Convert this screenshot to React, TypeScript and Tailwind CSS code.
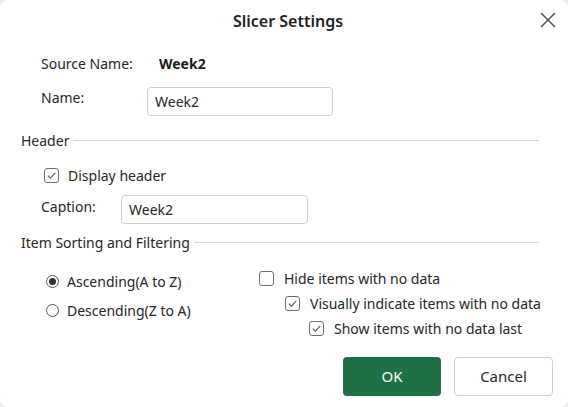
import { X } from "lucide-react";

const Check = ({ checked }: { checked: boolean }) => (
  <span className="flex size-[15px] shrink-0 items-center justify-center rounded-[3px] border border-[#6f6f6f] bg-white">
    {checked && (
      <svg viewBox="0 0 12 12" className="size-[13px]" fill="none">
        <path d="M2.6 6.1 L5 8.5 L9.5 3.6" stroke="#555" strokeWidth="1" />
      </svg>
    )}
  </span>
);

const Radio = ({ checked }: { checked: boolean }) => (
  <span className="flex size-[13px] shrink-0 items-center justify-center rounded-full border border-[#555]">
    {checked && <span className="size-[7px] rounded-full bg-[#333]" />}
  </span>
);

const Section = ({ title }: { title: string }) => (
  <div className="flex h-[20px] items-center gap-[4px] pl-[21px] pr-[29px]">
    <span>{title}</span>
    <span className="h-px flex-1 bg-[#d6d6d6]" />
  </div>
);

export default function App() {
  return (
    <div
      className="h-[407px] w-[568px] bg-[#ececec] text-[14px] text-[#262626]"
      style={{ fontFamily: '"Noto Sans", "Open Sans", sans-serif' }}
    >
      <div className="relative flex h-full flex-col rounded-[8px] bg-white">
        <div className="flex h-[41px] items-center justify-center pl-[8px]">
          <span className="text-[16px] font-semibold text-[#1f1f1f]">Slicer Settings</span>
          <X className="absolute right-[7px] top-[7px] size-[26px] text-[#555]" strokeWidth={1.4} />
        </div>

        <div className="mt-[11px] flex h-[22px] items-center pl-[41px]">
          <span className="w-[118px]">Source Name:</span>
          <span className="font-bold text-[#1a1a1a]">Week2</span>
        </div>

        <div className="mt-[13px] flex items-start pl-[41px]">
          <span className="mt-[1px] w-[106px] leading-[20px]">Name:</span>
          <div className="flex h-[29px] w-[186px] items-center rounded-[4px] border border-[#cfcfcf] px-[7px]">
            Week2
          </div>
        </div>

        <div className="mt-[14px]">
          <Section title="Header" />
        </div>

        <div className="mt-[15px] flex h-[20px] items-center gap-[9px] pl-[44px]">
          <Check checked />
          <span>Display header</span>
        </div>

        <div className="mt-[10px] flex items-start pl-[41px]">
          <span className="mt-[2px] w-[80px] leading-[20px]">Caption:</span>
          <div className="flex h-[29px] w-[187px] items-center rounded-[4px] border border-[#cfcfcf] px-[7px]">
            Week2
          </div>
        </div>

        <div className="mt-[8px]">
          <Section title="Item Sorting and Filtering" />
        </div>

        <div className="flex">
          <div className="mt-[19px] flex w-[259px] flex-col gap-[9px] pl-[46px]">
            <div className="flex h-[20px] items-center gap-[8px]">
              <Radio checked />
              <span>Ascending(A to Z)</span>
            </div>
            <div className="flex h-[20px] items-center gap-[8px]">
              <Radio checked={false} />
              <span>Descending(Z to A)</span>
            </div>
          </div>
          <div className="mt-[16px] flex flex-col gap-[5px]">
            <div className="flex h-[20px] items-center gap-[10px]">
              <Check checked={false} />
              <span>Hide items with no data</span>
            </div>
            <div className="flex h-[20px] items-center gap-[10px] pl-[26px]">
              <Check checked />
              <span>Visually indicate items with no data</span>
            </div>
            <div className="flex h-[20px] items-center gap-[10px] pl-[50px]">
              <Check checked />
              <span>Show items with no data last</span>
            </div>
          </div>
        </div>

        <div className="mt-auto flex justify-end gap-[13px] pb-[11px] pr-[15px]">
          <button className="flex h-[39px] w-[98px] items-center justify-center rounded-[4px] bg-[#1e7145] text-[15px] text-white">
            OK
          </button>
          <button className="flex h-[39px] w-[99px] items-center justify-center rounded-[4px] border border-[#cfcfcf] bg-white text-[15px] text-[#262626]">
            Cancel
          </button>
        </div>
      </div>
    </div>
  );
}
